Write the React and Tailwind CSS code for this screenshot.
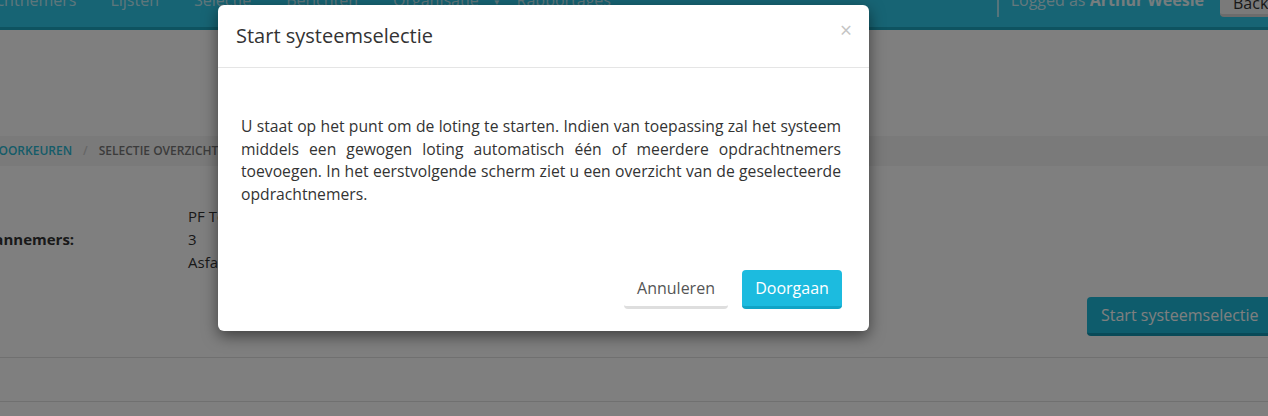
import React from "react";

export default function App() {
  return (
    <div className="relative w-[1268px] h-[416px] overflow-hidden bg-white text-[#333] font-['Open_Sans',sans-serif]">
      {/* Navbar */}
      <div className="h-[30px] bg-[#2ec8e8] border-b-[3px] border-[#1ca6c0] overflow-hidden">
        <div className="flex items-start -mt-[12px] text-[16px] leading-[24px] text-white/70">
          <div className="flex items-start whitespace-nowrap">
            <span className="-ml-[51px]">Opdrachtnemers</span>
            <span className="ml-[34px]">Lijsten</span>
            <span className="ml-[35px]">Selectie</span>
            <span className="ml-[35px]">Berichten</span>
            <span className="ml-[35px]">Organisatie<span className="ml-[14px] text-[8px] align-middle">▼</span></span>
            <span className="ml-[16px]">Rapportages</span>
          </div>
          <div className="ml-auto -mr-[22px] flex items-start whitespace-nowrap">
            <div className="w-[2px] h-[29px] bg-white/60 mr-[12px]"></div>
            <span className="text-white/75">Logged as <b className="font-bold text-white/90">Arthur Weesie</b></span>
            <div className="ml-[16px] h-[29px] w-[70px] bg-[#f4f4f4] rounded-bl-[4px] border-b-[3px] border-[#d8d8d8] pl-[13px] pt-[3px] text-[#333]">Back</div>
          </div>
        </div>
      </div>

      {/* Title area */}
      <div className="h-[106px]"></div>

      {/* Breadcrumb */}
      <div className="h-[30px] bg-[#f5f5f5] flex items-center text-[12px] font-semibold whitespace-nowrap">
        <span className="-ml-[9px] text-[#2ab8d2]">VOORKEUREN</span>
        <span className="mx-[11px] text-[#ccc]">/</span>
        <span className="text-[#777]">SELECTIE OVERZICHT</span>
      </div>

      {/* Details */}
      <div className="pt-[39px] flex text-[15px] leading-[23px] whitespace-nowrap">
        <div className="-ml-[68px] w-[256px] pt-[23px] font-bold text-[#333]">Aantal aannemers:</div>
        <div className="text-[#333]">
          <div>PF Test</div>
          <div>3</div>
          <div>Asfalt</div>
        </div>
      </div>

      <div className="flex justify-end mt-[23px]">
        <button className="-mr-[20px] h-[39px] w-[201px] bg-[#1cb8d8] border-b-[3px] border-[#1295b0] rounded-l-[4px] text-white text-[16px] text-left pl-[14px] whitespace-nowrap">
          Start systeemselectie
        </button>
      </div>

      <div className="mt-[21px] border-t border-[#e0e0e0]"></div>
      <div className="mt-[43px] border-t border-[#e0e0e0]"></div>

      {/* Overlay */}
      <div className="absolute inset-0 bg-black/50"></div>

      {/* Modal */}
      <div className="absolute left-[218px] top-[5px] w-[651px] h-[326px] bg-white rounded-[6px] shadow-[0_5px_15px_rgba(0,0,0,0.5)] flex flex-col">
        <div className="h-[63px] flex items-center justify-between pl-[18px] pr-[17px] border-b border-[#e5e5e5]">
          <h4 className="text-[20px] text-[#333] font-normal">Start systeemselectie</h4>
          <span className="text-[#c4c4c4] text-[21px] leading-none -mt-[12px]">×</span>
        </div>
        <div className="h-[202px] pt-[47px] pl-[23px] pr-[28px]">
          <p className="text-[15.7px] leading-[22.5px] text-[#333] text-justify">
            U staat op het punt om de loting te starten. Indien van toepassing zal het systeem middels een gewogen loting automatisch één of meerdere opdrachtnemers toevoegen. In het eerstvolgende scherm ziet u een overzicht van de geselecteerde opdrachtnemers.
          </p>
        </div>
        <div className="flex justify-end items-start gap-[14px] pr-[27px]">
          <button className="h-[39px] w-[104px] bg-white border-b-[3px] border-[#dedede] rounded-[4px] text-[16px] text-[#555]">
            Annuleren
          </button>
          <button className="h-[39px] w-[100px] bg-[#1cbbdf] border-b-[3px] border-[#10a4c6] rounded-[4px] text-[16px] text-white">
            Doorgaan
          </button>
        </div>
      </div>
    </div>
  );
}
